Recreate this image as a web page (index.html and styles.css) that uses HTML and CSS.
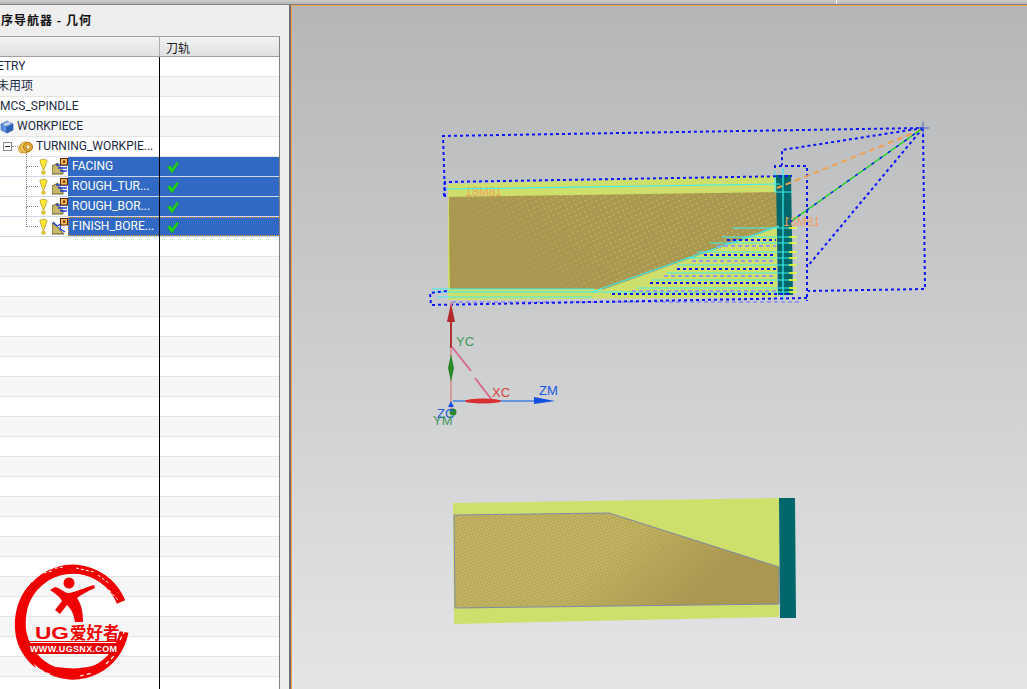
FILE: index.html
```html
<!DOCTYPE html>
<html lang="zh">
<head>
<meta charset="utf-8">
<title>工序导航器 - 几何</title>
<link rel="stylesheet" href="styles.css">
</head>
<body>
<div class="app">
  <div class="topbar"></div>
  <div class="work">
  <aside class="panel">
    <h1 class="panel-title">序导航器 - 几何</h1>
    <div class="table">
      <div class="head"><div class="c1"></div><div class="c2">刀轨</div></div>
      <div class="row"><div class="c1"><span class="lbl l-0">ETRY</span></div><div class="c2"></div></div>
      <div class="row alt"><div class="c1"><span class="lbl l-0">未用项</span></div><div class="c2"></div></div>
      <div class="row"><div class="c1"><span class="lbl">MCS_SPINDLE</span></div><div class="c2"></div></div>
      <div class="row alt"><div class="c1 ind-0"><svg class="ico16" viewBox="0 0 14 14"><path d="M7 1 13 4 7 7 1 4Z" fill="#8fb4ea" stroke="#4a78c4" stroke-width=".7"/><path d="M1 4V10L7 13V7Z" fill="#5a8fdc" stroke="#3b69b4" stroke-width=".7"/><path d="M13 4V10L7 13V7Z" fill="#2f63b8" stroke="#2a5aa8" stroke-width=".7"/><path d="M4 5.500 10 2.500" stroke="#fff"/></svg><span class="lbl">WORKPIECE</span></div><div class="c2"></div></div>
      <div class="row"><div class="c1 ind-1"><svg class="tog" viewBox="0 0 9 9"><rect x=".5" y=".5" width="8" height="8" fill="#fff" stroke="#8a8a8a"/><path d="M2 4.500H7" stroke="#333"/></svg><i class="dots-h"></i><svg class="ring" viewBox="0 0 15 14"><circle cx="4.500" cy="9" r="4" fill="#f8e6a8" stroke="#d09a2a"/><circle cx="7.500" cy="7.500" r="5.500" fill="#f3c65c" stroke="#c88e18"/><circle cx="10" cy="7" r="4.500" fill="#e9a92a" stroke="#a87412"/><circle cx="10" cy="7" r="2.200" fill="#fff2c0" stroke="#a87412" stroke-width=".7"/></svg><span class="lbl">TURNING_WORKPIE...</span></div><div class="c2"></div></div>

      <div class="row sel">
        <div class="c1 op"><i class="tree"></i><svg class="bulb" viewBox="0 0 9 17"><path d="M1 2.500C1 1 8 1 8 2.500 8 5 5.500 9 5 11.500H4C3.500 9 1 5 1 2.500Z" fill="#ffe632" stroke="#a88c10" stroke-width=".7"/><circle cx="4.500" cy="14.500" r="1.800" fill="#f0d020" stroke="#a88c10" stroke-width=".6"/></svg><svg class="opi" viewBox="0 0 16 17"><path d="M0 8 6 5V9H9V12H11V16H0Z" fill="#c9b86a" stroke="#4a4018" stroke-width=".8"/><path d="M4 7H15M6 10H15M8 13H15" stroke="#1f3fd8" stroke-width="1.300"/><rect x="8.500" y=".5" width="7" height="6.500" fill="#e8c050" stroke="#6a2010"/><rect x="11" y="2.500" width="2.200" height="2.200" fill="#802010"/></svg><span class="lbl">FACING</span></div>
        <div class="c2"><svg class="chk" viewBox="0 0 12 12"><path d="M.5 6 3 4.500 5 7.500 10 1 12 2 5.500 11.500H4Z" fill="#22d622" stroke="#119a11" stroke-width=".5"/></svg></div>
      </div>
      <div class="row sel">
        <div class="c1 op"><i class="tree"></i><svg class="bulb" viewBox="0 0 9 17"><path d="M1 2.500C1 1 8 1 8 2.500 8 5 5.500 9 5 11.500H4C3.500 9 1 5 1 2.500Z" fill="#ffe632" stroke="#a88c10" stroke-width=".7"/><circle cx="4.500" cy="14.500" r="1.800" fill="#f0d020" stroke="#a88c10" stroke-width=".6"/></svg><svg class="opi" viewBox="0 0 16 17"><path d="M0 8 6 5V9H9V12H11V16H0Z" fill="#c9b86a" stroke="#4a4018" stroke-width=".8"/><path d="M4 7H15M6 10H15M8 13H15" stroke="#1f3fd8" stroke-width="1.300"/><rect x="8.500" y=".5" width="7" height="6.500" fill="#e8c050" stroke="#6a2010"/><rect x="11" y="2.500" width="2.200" height="2.200" fill="#802010"/></svg><span class="lbl">ROUGH_TUR...</span></div>
        <div class="c2"><svg class="chk" viewBox="0 0 12 12"><path d="M.5 6 3 4.500 5 7.500 10 1 12 2 5.500 11.500H4Z" fill="#22d622" stroke="#119a11" stroke-width=".5"/></svg></div>
      </div>
      <div class="row sel">
        <div class="c1 op"><i class="tree"></i><svg class="bulb" viewBox="0 0 9 17"><path d="M1 2.500C1 1 8 1 8 2.500 8 5 5.500 9 5 11.500H4C3.500 9 1 5 1 2.500Z" fill="#ffe632" stroke="#a88c10" stroke-width=".7"/><circle cx="4.500" cy="14.500" r="1.800" fill="#f0d020" stroke="#a88c10" stroke-width=".6"/></svg><svg class="opi" viewBox="0 0 16 17"><path d="M0 8 6 5V9H9V12H11V16H0Z" fill="#c9b86a" stroke="#4a4018" stroke-width=".8"/><path d="M4 7H15M6 10H15M8 13H15" stroke="#1f3fd8" stroke-width="1.300"/><rect x="8.500" y=".5" width="7" height="6.500" fill="#e8c050" stroke="#6a2010"/><rect x="11" y="2.500" width="2.200" height="2.200" fill="#802010"/></svg><span class="lbl">ROUGH_BOR...</span></div>
        <div class="c2"><svg class="chk" viewBox="0 0 12 12"><path d="M.5 6 3 4.500 5 7.500 10 1 12 2 5.500 11.500H4Z" fill="#22d622" stroke="#119a11" stroke-width=".5"/></svg></div>
      </div>
      <div class="row sel focus">
        <div class="c1 op"><i class="tree"></i><svg class="bulb" viewBox="0 0 9 17"><path d="M1 2.500C1 1 8 1 8 2.500 8 5 5.500 9 5 11.500H4C3.500 9 1 5 1 2.500Z" fill="#ffe632" stroke="#a88c10" stroke-width=".7"/><circle cx="4.500" cy="14.500" r="1.800" fill="#f0d020" stroke="#a88c10" stroke-width=".6"/></svg><svg class="opi" viewBox="0 0 16 17"><path d="M0 5 6 9 8 12 12 16H0Z" fill="#c9b86a" stroke="#4a4018" stroke-width=".8"/><path d="M1 4 5 8 9 6 8 11 13 14" fill="none" stroke="#1f3fd8" stroke-width="1.300"/><rect x="8.500" y=".5" width="7" height="6.500" fill="#e8c050" stroke="#6a2010"/><rect x="11" y="2.500" width="2.200" height="2.200" fill="#802010"/></svg><span class="lbl">FINISH_BORE...</span></div>
        <div class="c2"><svg class="chk" viewBox="0 0 12 12"><path d="M.5 6 3 4.500 5 7.500 10 1 12 2 5.500 11.500H4Z" fill="#22d622" stroke="#119a11" stroke-width=".5"/></svg></div>
      </div>

      <div class="row"><div class="c1"></div><div class="c2"></div></div>
      <div class="row alt"><div class="c1"></div><div class="c2"></div></div>
      <div class="row"><div class="c1"></div><div class="c2"></div></div>
      <div class="row alt"><div class="c1"></div><div class="c2"></div></div>
      <div class="row"><div class="c1"></div><div class="c2"></div></div>
      <div class="row alt"><div class="c1"></div><div class="c2"></div></div>
      <div class="row"><div class="c1"></div><div class="c2"></div></div>
      <div class="row alt"><div class="c1"></div><div class="c2"></div></div>
      <div class="row"><div class="c1"></div><div class="c2"></div></div>
      <div class="row alt"><div class="c1"></div><div class="c2"></div></div>
      <div class="row"><div class="c1"></div><div class="c2"></div></div>
      <div class="row alt"><div class="c1"></div><div class="c2"></div></div>
      <div class="row"><div class="c1"></div><div class="c2"></div></div>
      <div class="row alt"><div class="c1"></div><div class="c2"></div></div>
      <div class="row"><div class="c1"></div><div class="c2"></div></div>
      <div class="row alt"><div class="c1"></div><div class="c2"></div></div>
      <div class="row"><div class="c1"></div><div class="c2"></div></div>
      <div class="row alt"><div class="c1"></div><div class="c2"></div></div>
      <div class="row"><div class="c1"></div><div class="c2"></div></div>
      <div class="row alt"><div class="c1"></div><div class="c2"></div></div>
      <div class="row"><div class="c1"></div><div class="c2"></div></div>
      <div class="row alt"><div class="c1"></div><div class="c2"></div></div>
      <div class="row"><div class="c1"></div><div class="c2"></div></div>
      <div class="row alt"><div class="c1"></div><div class="c2"></div></div>
      <div class="row"><div class="c1"></div><div class="c2"></div></div>
    </div>

    <svg class="logo" viewBox="0 0 120 124" aria-label="UG爱好者">
      <path d="M111 42A52 53 0 1 0 114 72" fill="none" stroke="#f00000" stroke-width="9"/>
      <path d="M22 22C6 38 1 62 8 84 12 94 18 102 26 108 14 86 10 54 26 26Z" fill="#f00000"/>
      <path d="M20 100C40 122 84 124 106 92 96 104 76 110 56 108 42 107 30 104 20 100Z" fill="#f00000"/>
      <path class="streak" d="M40 9 54 7M66 8 84 12M34 13 42 11M88 15 100 24M99 30 108 40M14 30 20 24"/>
      <path class="streak2" d="M30 110 42 115M70 116 82 113M96 104 106 94M110 80 114 72"/>
      <circle cx="59" cy="23" r="5.500" fill="#f00000"/>
      <path d="M40 30 45 27C50 28 55 33 58 33 64 33 76 27 84 25L85 28C78 31 72 34 67 38 72 45 73 54 73 62H65C64 54 61 49 57 45L50 54 45 50 52 41C50 37 45 33 40 30Z" fill="#f00000"/>
      <text class="logo-ug" x="25" y="79" textLength="34" lengthAdjust="spacingAndGlyphs">UG</text>
      <text class="logo-cn" x="60" y="79">爱好者</text>
      <rect x="18" y="81" width="91" height="1" fill="#f00000"/>
      <rect x="18" y="83" width="91" height="11" rx="2" fill="#e80000"/>
      <text class="logo-url" x="20" y="92" textLength="87">WWW.UGSNX.COM</text>
    </svg>
  </aside>
  <div class="splitter"></div>
  <main class="view">
    <svg class="scene" viewBox="0 0 734 683" aria-label="几何视图">
      <defs>
        <pattern id="hatch" width="3" height="3" patternUnits="userSpaceOnUse" patternTransform="rotate(-20)">
          <rect width="3" height="3" fill="#b9a65a"/><rect width="1.500" height="1.500" fill="#c9c767"/>
        </pattern>
        <pattern id="hatch-sparse" width="5" height="5" patternUnits="userSpaceOnUse" patternTransform="rotate(-25)">
          <rect width="5" height="5" fill="#aa9851"/><rect width="2" height="1.200" fill="#bdb65f"/>
        </pattern>
        <linearGradient id="fade" gradientUnits="userSpaceOnUse" x1="330" y1="545" x2="390" y2="610">
          <stop offset="0" stop-color="#aa9851" stop-opacity="0"/><stop offset="1" stop-color="#aa9851"/>
        </linearGradient>
        <linearGradient id="fade-up" gradientUnits="userSpaceOnUse" x1="180" y1="280" x2="260" y2="190">
          <stop offset="0" stop-color="#aa9851"/><stop offset="1" stop-color="#aa9851" stop-opacity="0"/>
        </linearGradient>
      </defs>
      <g class="shift">
      <!-- upper part -->
      <path d="M156 184 485 176V297L156 300Z" fill="#cfdf6b"/>
      <path d="M157 197 485 192V226L310 289H158Z" fill="url(#hatch-sparse)"/>
      <path d="M157 197 485 192V226L310 289H158Z" fill="url(#fade-up)"/>
      <path d="M484 175H499L501 295H486Z" fill="#00686a"/>
      <path d="M487 226 310 289" stroke="#a08a50" stroke-width="1.500"/>
      <text class="t-or mirror-a" x="-210" y="196">18M81</text>
      <text class="t-or mirror-a" x="-528" y="226">18M81</text>
      <g class="cyan">
        <path d="M153 189 488 184M483 171V192H500M491 168V300M483 192H497"/>
        <path d="M487 226 300 292"/>
        <path d="M440 228H506M430 237H506M418 243H506M405 252H506M395 258H506M385 265H506M375 273H506M360 280H506M345 288H506M300 292H506M142 292H300M145 297H300M140 289H302"/>
      </g>
      <path class="yel" d="M497 228H505M497 237H505M497 243H505M497 252H505M497 258H505M497 265H505M497 273H505M497 280H505M497 288H505M497 292H505"/>
      <g class="lilac">
        <path d="M425 246H484M400 261H484M372 276H484M340 291H484M160 302H510"/>
      </g>
      <g class="blue">
        <path d="M153 197 151 136 631 128M631 128 633 289 516 291M631 128 490 150V165M631 128 515 267"/>
        <path d="M152 196 153 182 500 176M483 168V166H515V301M515 298 139 305 138 293 155 291"/>
        <path d="M435 240H484M412 255H484M385 269H484M358 283H484M320 294H500"/>
      </g>
      <path class="orange" d="M629 130 505 180 485 188"/>
      <path d="M631 128 498 222" stroke="#13d41f" stroke-width="1.500"/>
      <path class="thinblue" d="M631 128 498 222"/>
      <path d="M631 122V134M625 128H637" stroke="#4a60d0"/>

      <!-- wcs -->
      <path d="M159 302V410" stroke="#d89a9a" stroke-width="2"/>
      <path d="M159 303 155 322H163Z" fill="#b22a2a"/>
      <path d="M159 322V348" stroke="#b43030" stroke-width="2"/>
      <path d="M159 354 156 368 159 382 162 368Z" fill="#2b8a2b"/>
      <path class="pink" d="M160 347 179 371M183 378 200 400" />
      <path d="M161 401H245" stroke="#3f7fe0" stroke-width="1.500"/>
      <path d="M242 397 263 401 242 404Z" fill="#1450e0"/>
      <ellipse cx="191" cy="401" rx="18" ry="2.500" fill="#d83030"/>
      <path d="M159 401 156 407H162Z" fill="#1450e0"/>
      <circle cx="161" cy="412" r="3.500" fill="#2b8a2b"/>
      <text class="t-g" x="164" y="346">YC</text>
      <text class="t-r" x="200" y="397">XC</text>
      <text class="t-b" x="247" y="395">ZM</text>
      <text class="t-b" x="145" y="418">ZC</text>
      <text class="t-g" x="141" y="425">YM</text>

      <!-- lower part -->
      <path d="M161 503 487 498V617L162 624Z" fill="#cfdf6b"/>
      <path d="M162 515 317 513 487 567V604L163 608Z" fill="url(#hatch)"/>
      <path d="M162 515 317 513 487 567V604L163 608Z" fill="url(#fade)"/>
      <path d="M162 515 317 513 487 567V604L163 608Z" fill="none" stroke="#7f8aa8"/>
      <path d="M487 498H503L504 618H488Z" fill="#00686a"/>
      </g>
    </svg>
  </main>
  </div>
</div>
</body>
</html>
```
FILE: styles.css
```css
* { box-sizing: border-box; }
html, body { margin: 0; height: 100%; overflow: hidden; }
body { font-family: Roboto, "Noto Sans CJK SC", sans-serif; font-size: 12px; color: #1a2a44; background: #f0f0f0; }
.app { display: flex; flex-direction: column; height: 689px; }
.topbar { position: relative; height: 5px; flex: none; background: linear-gradient(#cfcfcf, #b4b4b4); border-bottom: 1px solid #808080; }
.topbar::after { content: ""; position: absolute; left: 836px; top: 0; width: 1px; height: 4px; background: #f4f4f4; }
.work { flex: 1; display: flex; min-height: 0; }
.panel { position: relative; width: 289px; flex: none; background: #eeeeee; overflow: hidden; }
.panel-title { margin: 0; height: 31px; padding: 8px 0 0 1px; font-size: 12px; font-weight: bold; line-height: 14px; color: #111; letter-spacing: 1px; font-family: "Noto Sans CJK SC", sans-serif; }
.table { position: relative; width: 280px; border-right: 1px solid #808080; border-top: 1px solid #a0a0a0; background: #fff; }
.table::after { content: ""; position: absolute; left: 159px; top: 20px; bottom: 0; width: 1px; background: #000; }
.head { display: flex; height: 20px; background: linear-gradient(#f2f4f4, #dfe1e1); border-bottom: 1px solid #a0a0a0; }
.head .c1 { border-right: 1px solid #b0b0b0; }
.head .c2 { padding: 1px 0 0 6px; font-family: "Noto Sans CJK SC", sans-serif; color: #222; line-height: 15px; }
.row { display: flex; height: 20px; background: #fff; border-bottom: 1px solid #e4e4e4; }
.row.alt { background: #f6f6f6; }
.c1 { width: 160px; flex: none; display: flex; align-items: center; white-space: nowrap; min-width: 0; }
.c2 { flex: 1; display: flex; align-items: center; }
.lbl { line-height: 19px; overflow: hidden; }
.l-0 { margin-left: -3px; }
.ind-0 { gap: 3px; }
.ind-1 { padding-left: 3px; }
.ico16 { width: 14px; height: 14px; flex: none; }
.tog { width: 9px; height: 9px; flex: none; }
.dots-h { width: 6px; border-top: 1px dotted #888; flex: none; }
.ring { width: 15px; height: 14px; margin-right: 3px; flex: none; }
.op { position: relative; padding-left: 39px; }
.tree { position: absolute; left: 26px; top: -10px; width: 12px; height: 20px; border-left: 1px dotted #888; border-bottom: 1px dotted #888; }
.bulb { width: 9px; height: 17px; flex: none; margin-right: 4px; }
.opi { width: 16px; height: 17px; flex: none; }
.sel .lbl { display: flex; align-items: center; align-self: stretch; flex: 1; min-width: 0; background: #316ac5; color: #fff; padding-left: 4px; }
.sel { border-bottom: 1px solid #d0d8e4; }
.sel .c2 { background: #316ac5; padding-left: 7px; }
.focus .lbl { outline: 1px dotted #f09000; outline-offset: -1px; }
.focus .c2 { border-top: 1px dotted #f09000; border-bottom: 1px dotted #f09000; }
.chk { width: 12px; height: 12px; }
.logo { position: absolute; left: 10px; top: 555px; width: 120px; height: 124px; }
.streak { fill: none; stroke: #fff; stroke-width: 1; stroke-dasharray: 3 2; }
.streak2 { fill: none; stroke: #fff; stroke-width: 1.200; stroke-dasharray: 4 3; }
.logo-ug { font: bold 17px "Liberation Sans", sans-serif; fill: #f00000; }
.logo-cn { font: bold 16.500px "Noto Sans CJK SC", sans-serif; fill: #f00000; }
.logo-url { font: bold 9px "Liberation Sans", sans-serif; fill: #fff; }
.splitter { width: 2px; flex: none; background: #6e6e6e; }
.view { flex: 1; background: linear-gradient(#b5b6b8, #e4e5e7); overflow: hidden; border-top: 1px solid #f0a050; border-left: 1px solid #f0a050; }
.scene { display: block; width: 734px; height: 683px; }
.shift { transform: translate(0, -6px); }
.mirror-a { transform: scaleX(-1); }
.cyan path { fill: none; stroke: #3ff0f0; stroke-width: 1.200; }
.yel { stroke: #ffff20; stroke-width: 1.500; fill: none; }
.lilac path { fill: none; stroke: #9a9ae6; stroke-width: 2; stroke-dasharray: 4 3; }
.blue path { fill: none; stroke: #0a14ff; stroke-width: 2; stroke-dasharray: 3 3; }
.orange { fill: none; stroke: #f0a050; stroke-width: 2; stroke-dasharray: 6 4; }
.thinblue { fill: none; stroke: #0a14ff; stroke-width: 1.500; stroke-dasharray: 3 7; }
.pink { fill: none; stroke: #d86a90; stroke-width: 2; }
.t-or { font: 12px "Liberation Sans", sans-serif; fill: #f0a060; }
.t-g { font: 13px "Liberation Sans", sans-serif; fill: #3f9a5a; }
.t-r { font: 13px "Liberation Sans", sans-serif; fill: #d84040; }
.t-b { font: 13px "Liberation Sans", sans-serif; fill: #1a5ae0; }
```
